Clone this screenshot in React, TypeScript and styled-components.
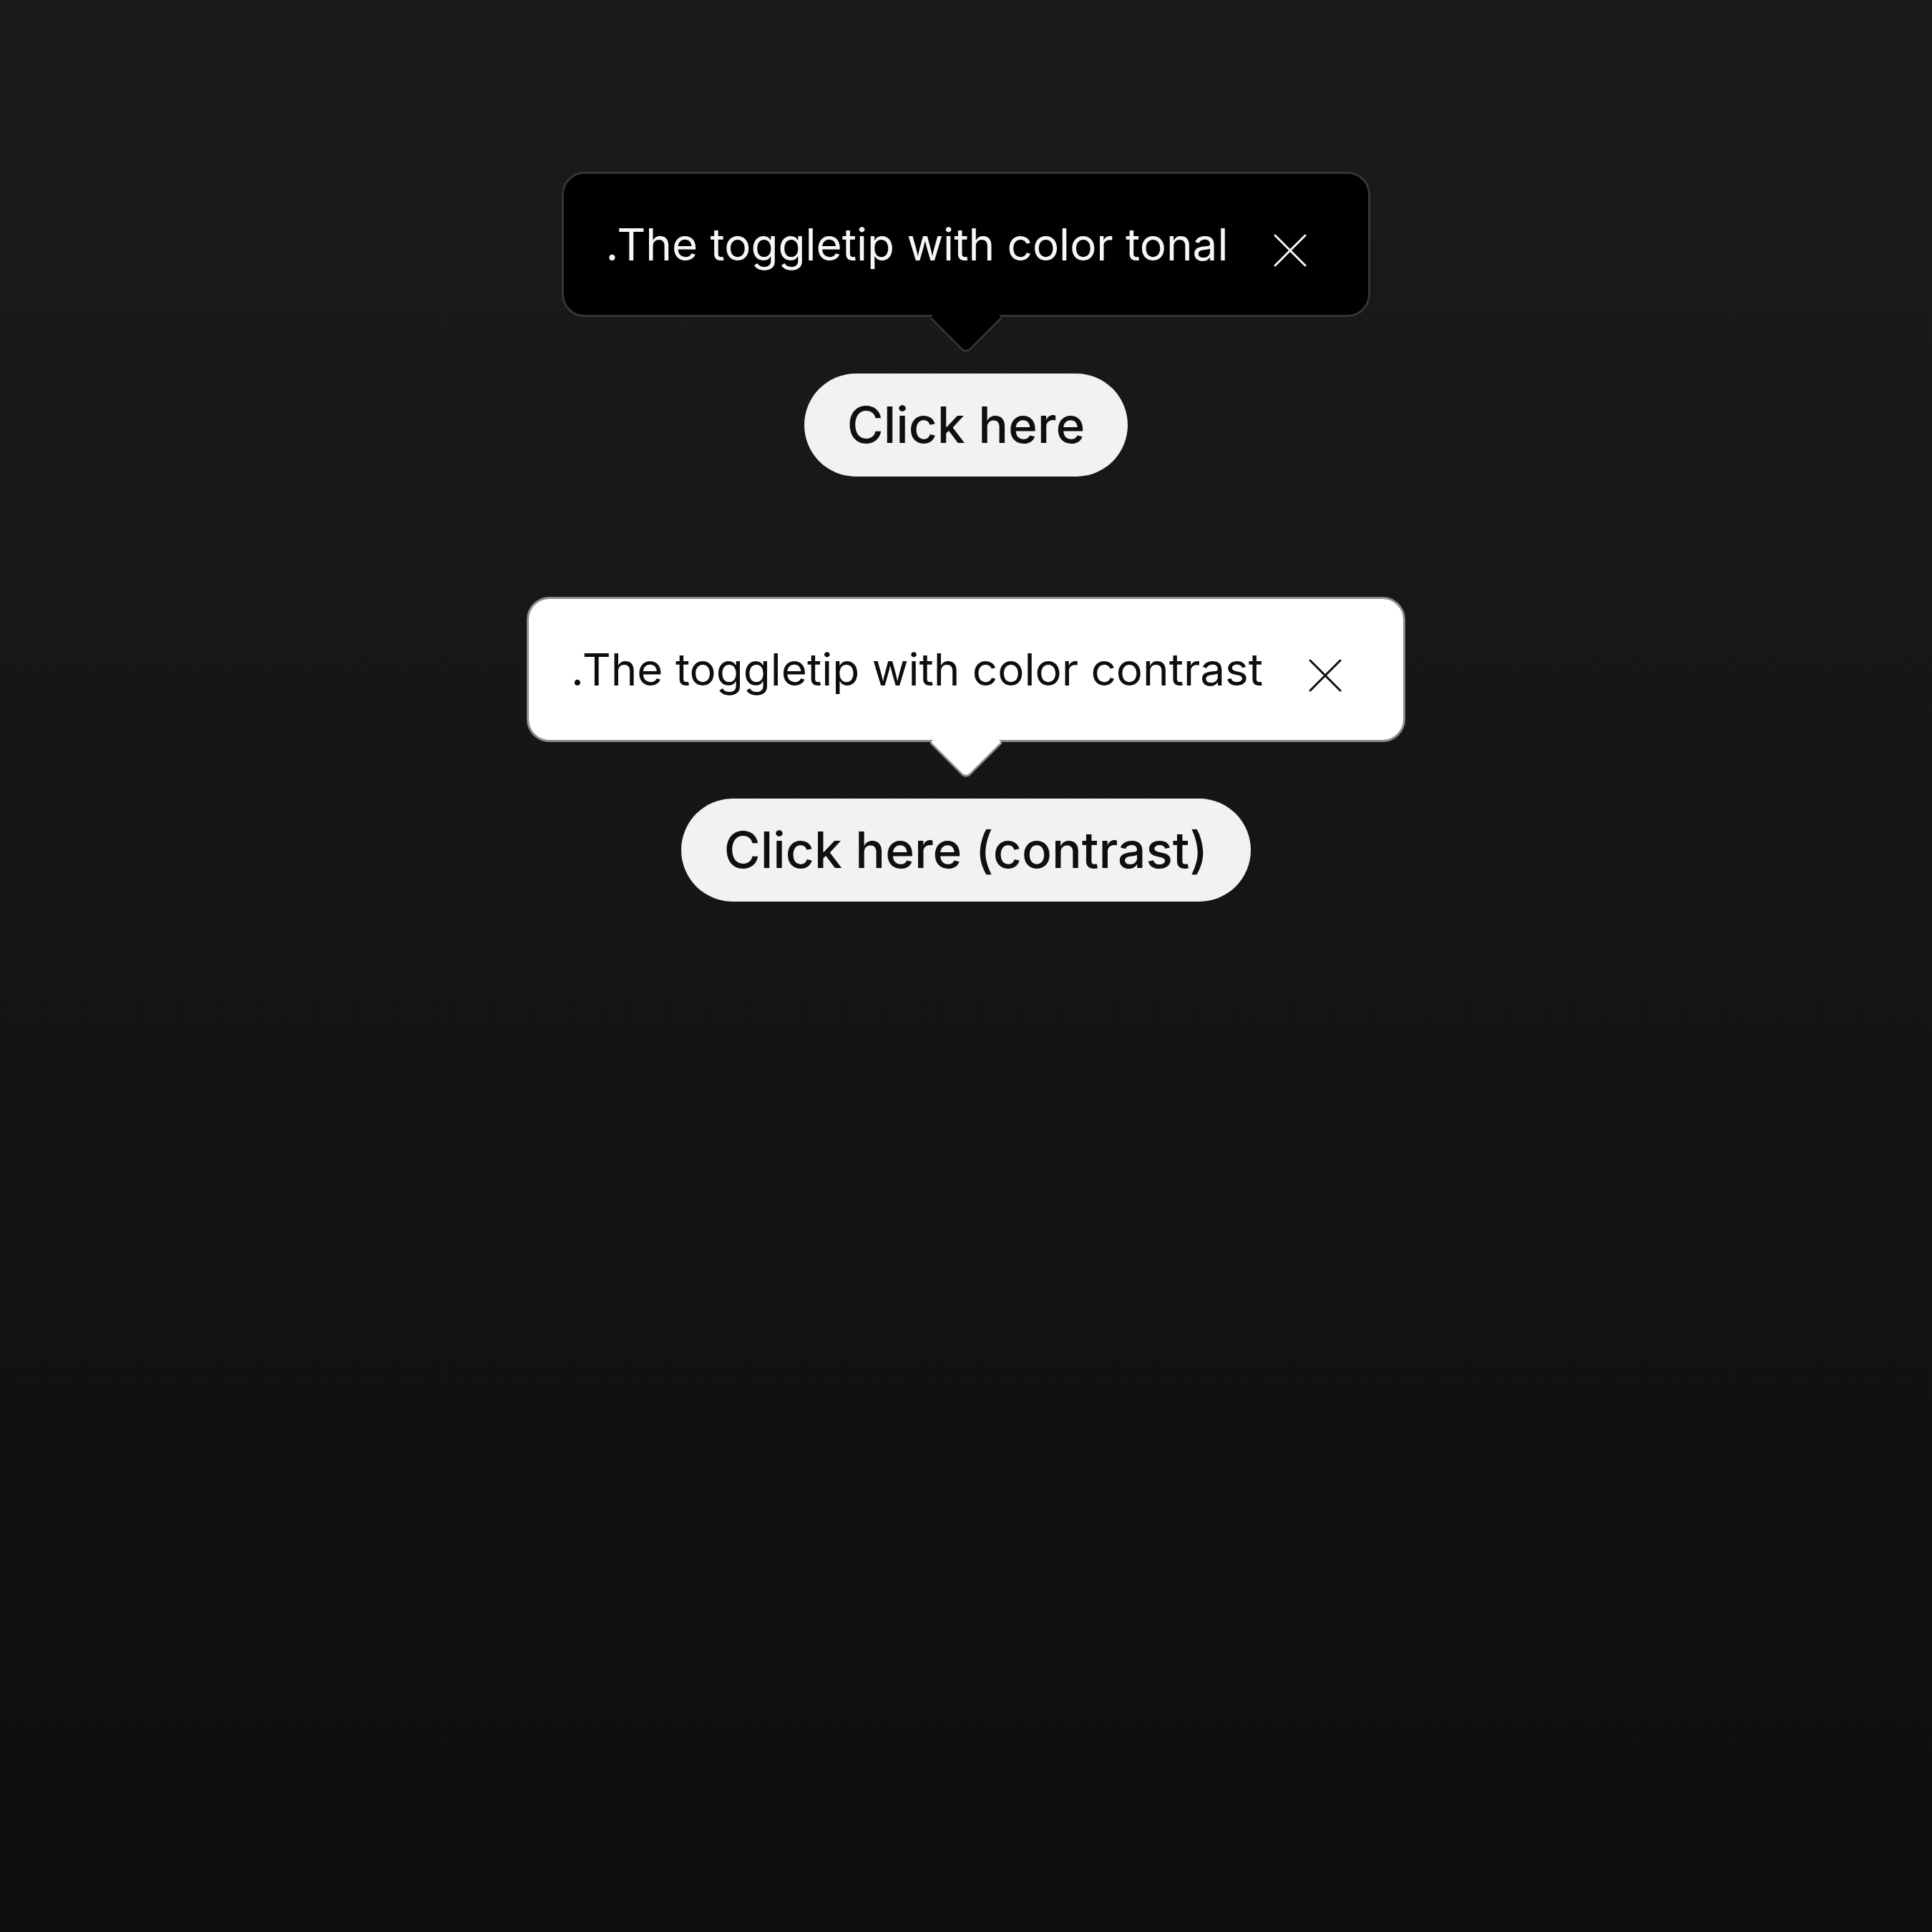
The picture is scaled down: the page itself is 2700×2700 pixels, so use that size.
import React from 'react';
import styled, { createGlobalStyle } from 'styled-components';

type Tone = 'tonal' | 'contrast';

const palette = {
  tonal: { bg: '#000000', border: '#353535', text: '#f7f7f7' },
  contrast: { bg: '#ffffff', border: '#8c8c8c', text: '#0d0d0d' },
};

const GlobalStyle = createGlobalStyle`
  html, body {
    margin: 0;
    padding: 0;
  }
  body {
    font-family: Inter, "Noto Sans", sans-serif;
    background: linear-gradient(180deg, #1b1b1b 0%, #0e0e0e 100%);
    min-height: 2700px;
  }
`;

interface ToggletipProps {
  tone: Tone;
  text: string;
  label: string;
}

const Toggletip: React.FC<ToggletipProps> = ({ tone, text, label }) => (
  <Section>
    <Bubble $tone={tone}>
      <Message>{text}</Message>
      <CloseButton $tone={tone} aria-label="Close">
        <svg width="46" height="46" viewBox="0 0 46 46" fill="none">
          <path d="M2 2L44 44M44 2L2 44" stroke="currentColor" strokeWidth="3" strokeLinecap="round" />
        </svg>
      </CloseButton>
    </Bubble>
    <Trigger>{label}</Trigger>
  </Section>
);

export default function App() {
  return (
    <>
      <GlobalStyle />
      <Page>
        <Toggletip tone="tonal" text=".The toggletip with color tonal" label="Click here" />
        <Toggletip tone="contrast" text=".The toggletip with color contrast" label="Click here (contrast)" />
      </Page>
    </>
  );
}

const Page = styled.main`
  display: flex;
  flex-direction: column;
  align-items: center;
  gap: 168px;
  padding-top: 240px;
  min-height: 2700px;
  box-sizing: border-box;
`;

const Section = styled.div`
  display: flex;
  flex-direction: column;
  align-items: center;
  gap: 79px;
`;

const Bubble = styled.div<{ $tone: Tone }>`
  position: relative;
  display: flex;
  align-items: center;
  gap: 64px;
  height: 203px;
  box-sizing: border-box;
  padding: 0 86px 0 59px;
  background: ${p => palette[p.$tone].bg};
  border: 3px solid ${p => palette[p.$tone].border};
  border-radius: 32px;
  color: ${p => palette[p.$tone].text};

  &::after {
    content: '';
    position: absolute;
    left: 50%;
    bottom: -41px;
    width: 72px;
    height: 72px;
    box-sizing: border-box;
    background: ${p => palette[p.$tone].bg};
    border-right: 3px solid ${p => palette[p.$tone].border};
    border-bottom: 3px solid ${p => palette[p.$tone].border};
    border-bottom-right-radius: 10px;
    transform: translateX(-50%) rotate(45deg);
  }
`;

const Message = styled.span`
  font-size: 62px;
  font-weight: 400;
  white-space: nowrap;
  line-height: 1;
`;

const CloseButton = styled.button<{ $tone: Tone }>`
  display: flex;
  align-items: center;
  justify-content: center;
  padding: 0;
  margin: 16px 0 0;
  border: none;
  background: transparent;
  color: ${p => palette[p.$tone].text};
  cursor: pointer;
`;

const Trigger = styled.button`
  height: 144px;
  padding: 0 60px;
  border: none;
  border-radius: 72px;
  background: #f2f2f2;
  color: #0f0f0f;
  font-family: Inter, "Noto Sans", sans-serif;
  font-size: 69.5px;
  font-weight: 500;
  white-space: nowrap;
  cursor: pointer;
`;
